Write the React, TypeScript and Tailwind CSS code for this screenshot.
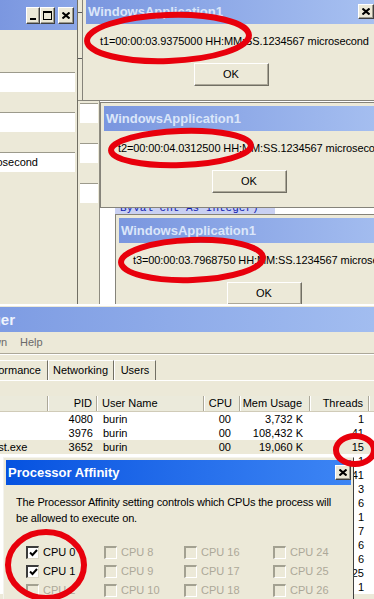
import React from "react";

type Proc = { name: string; pid: string; user: string; cpu: string; mem: string; threads: string };

// rows from the 4th on sit behind the affinity dialog; only their thread count shows
const procs: Proc[] = [
  { name: "ctfmon.exe", pid: "4080", user: "burin", cpu: "00", mem: "3,732 K", threads: "1" },
  { name: "devenv.exe", pid: "3976", user: "burin", cpu: "00", mem: "108,432 K", threads: "41" },
  { name: "ProcessorTest.exe", pid: "3652", user: "burin", cpu: "00", mem: "19,060 K", threads: "15" },
  { name: "", pid: "3412", user: "", cpu: "", mem: "", threads: "1" },
  { name: "", pid: "3320", user: "", cpu: "", mem: "", threads: "41" },
  { name: "", pid: "3104", user: "", cpu: "", mem: "", threads: "3" },
  { name: "", pid: "1796", user: "", cpu: "", mem: "", threads: "6" },
  { name: "", pid: "1720", user: "", cpu: "", mem: "", threads: "1" },
  { name: "", pid: "1548", user: "", cpu: "", mem: "", threads: "7" },
  { name: "", pid: "1384", user: "", cpu: "", mem: "", threads: "6" },
  { name: "", pid: "1264", user: "", cpu: "", mem: "", threads: "6" },
  { name: "", pid: "1120", user: "", cpu: "", mem: "", threads: "25" },
  { name: "", pid: "904", user: "", cpu: "", mem: "", threads: "1" },
];

const CloseGlyph = () => (
  <svg width="8" height="7" viewBox="0 0 8 7">
    <path d="M0.5 0.5L7.5 6.5M7.5 0.5L0.5 6.5" stroke="#000" strokeWidth="2" />
  </svg>
);

function CaptionButton({ children, className = "" }: { children?: React.ReactNode; className?: string }) {
  return (
    <div
      className={`flex items-center justify-center bg-[#ece9d8] border border-t-white border-l-white border-r-[#404040] border-b-[#404040] shadow-[inset_-1px_-1px_0_#9d9b8e] ${className}`}
    >
      {children}
    </div>
  );
}

function OkButton() {
  return (
    <div className="self-center w-[75px] h-[23px] shrink-0 flex items-center justify-center text-[11px] text-black bg-[#ece9d8] border border-t-white border-l-white border-r-[#716f64] border-b-[#716f64] shadow-[inset_-1px_-1px_0_#aca899]">
      OK
    </div>
  );
}

function MsgBox({ text, close }: { text: string; close?: boolean }) {
  return (
    <div className="flex flex-col w-full h-full bg-[#ece9d8] border border-[#85837a] p-[3px]">
      <div className="h-[25px] shrink-0 flex items-center pl-[2px] pr-[2px] bg-linear-to-r from-[#7a96df] to-[#a8c1f1]">
        <span className="text-[13px] font-bold leading-none text-[#dbe6f9]">WindowsApplication1</span>
        {close && (
          <CaptionButton className="ml-auto w-[16px] h-[15px]">
            <CloseGlyph />
          </CaptionButton>
        )}
      </div>
      <div className="pl-[14px] pt-[11px] text-[11px] leading-[13px] whitespace-nowrap tracking-[-0.1px] text-black">
        {text}
      </div>
      <div className="mt-[15px] flex flex-col">
        <OkButton />
      </div>
    </div>
  );
}

function Check({ on, disabled }: { on?: boolean; disabled?: boolean }) {
  return (
    <div
      className={
        disabled
          ? "w-[13px] h-[13px] shrink-0 bg-[#ece9d8] border-t-2 border-l-2 border-b border-r border-t-[#a3a191] border-l-[#a3a191] border-b-white border-r-white"
          : "w-[13px] h-[13px] shrink-0 flex items-center justify-center bg-white border-t-2 border-l-2 border-b border-r border-t-[#3c3c3c] border-l-[#3c3c3c] border-b-[#dcd8c8] border-r-[#dcd8c8]"
      }
    >
      {on && (
        <svg width="9" height="8" viewBox="0 0 9 8">
          <path d="M1 3.5L3.5 6L8 1" fill="none" stroke="#000" strokeWidth="2" />
        </svg>
      )}
    </div>
  );
}

const cpuRows = [
  [0, 8, 16, 24],
  [1, 9, 17, 25],
  [2, 10, 18, 26],
];

const colW = ["w-[48px]", "w-[49px]", "w-[107px]", "w-[36px]", "w-[70px]", "w-[59px]"];

export default function App() {
  return (
    <div className="relative w-[374px] h-[599px] overflow-hidden bg-[#ece9d8] font-['Liberation_Sans',Arial,sans-serif] text-black">
      {/* form behind, top left */}
      <div className="absolute left-0 top-0 w-[78px] h-[306px] flex flex-col bg-[#ece9d8] border-r border-[#716f64]">
        <div className="h-[30px] shrink-0 flex items-center justify-end pr-[3px] bg-linear-to-r from-[#7b97e0] to-[#8ba6e7]">
          <CaptionButton className="w-[14px] h-[17px] items-end pb-[3px]">
            <div className="w-[6px] h-[2px] bg-black" />
          </CaptionButton>
          <CaptionButton className="w-[15px] h-[17px]">
            <div className="w-[9px] h-[9px] border border-t-2 border-black" />
          </CaptionButton>
          <CaptionButton className="ml-[3px] w-[16px] h-[17px]">
            <CloseGlyph />
          </CaptionButton>
        </div>
        <div className="flex flex-col pt-[42px] gap-[20px]">
          <div className="w-[75px] h-[20px] bg-white border-t border-[#9c9a8c]" />
          <div className="w-[75px] h-[20px] bg-white border-t border-[#9c9a8c]" />
          <div className="w-[75px] h-[20px] bg-white border-t border-[#9c9a8c] flex items-center overflow-hidden">
            <div className="w-[38px] shrink-0 flex justify-end whitespace-nowrap text-[11px] leading-[13px]">
              t1=00:00:03.9375000 HH:MM:SS.1234567 microsecond
            </div>
          </div>
        </div>
      </div>

      {/* ruler marks between windows */}
      <div className="absolute left-[78px] top-0 w-[5px] h-[100px] flex flex-col pt-[12px] gap-[45px]">
        <div className="w-[4px] h-[1px] bg-[#5a5a5a]" />
        <div className="w-[4px] h-[1px] bg-[#5a5a5a]" />
      </div>

      {/* strip of a second form */}
      <div className="absolute left-[78px] top-[100px] w-[22px] h-[206px] flex flex-col pt-[2px] gap-[20px] bg-[#ece9d8] border-t border-r border-[#8d8b80]">
        <div className="ml-[2px] w-[18px] h-[20px] bg-white border-t border-[#9c9a8c]" />
        <div className="ml-[2px] w-[18px] h-[20px] bg-white border-t border-[#9c9a8c]" />
        <div className="ml-[2px] w-[18px] h-[20px] bg-white border-t border-[#9c9a8c]" />
      </div>

      {/* code editor behind the message boxes */}
      <div className="absolute left-[100px] top-[100px] w-[274px] h-[206px] bg-white flex flex-col">
        <div className="mt-[108px] ml-[15px] w-[160px] h-[6px] overflow-hidden flex items-end bg-[#c9d0f2]">
          <span className="pl-[5px] mb-[-1px] whitespace-nowrap font-['Liberation_Mono',monospace] text-[11px] leading-[13px] text-[#1020b0]">
            ByVal cnt As Integer)
          </span>
        </div>
      </div>

      {/* message boxes */}
      <div className="absolute left-[82px] top-[-5px] w-[298px] h-[106px]">
        <MsgBox text="t1=00:00:03.9375000 HH:MM:SS.1234567 microsecond" close />
      </div>
      <div className="absolute left-[100px] top-[102px] w-[298px] h-[106px]">
        <MsgBox text="t2=00:00:04.0312500 HH:MM:SS.1234567 microsecond" />
      </div>
      <div className="absolute left-[115px] top-[214px] w-[298px] h-[106px]">
        <MsgBox text="t3=00:00:03.7968750 HH:MM:SS.1234567 microsecond" />
      </div>

      {/* task manager */}
      <div className="absolute left-0 top-[304px] w-[374px] h-[295px] flex flex-col bg-[#ece9d8] border-t-2 border-white">
        <div className="mt-[1px] h-[25px] shrink-0 flex items-center bg-linear-to-r from-[#7e9ce3] to-[#a2bdf0]">
          <div className="w-[15px] shrink-0 flex justify-end whitespace-nowrap text-[15px] font-bold leading-none text-[#eef3fd]">
            Windows Task Manager
          </div>
        </div>
        <div className="h-[21px] shrink-0 flex items-center text-[11px] text-[#6a6a6a]">
          <div className="w-[7px] shrink-0 flex justify-end whitespace-nowrap">Shut Down</div>
          <span className="ml-[13px]">Help</span>
        </div>
        <div className="h-[2px] shrink-0 border-t border-[#aca899] border-b border-b-white" />
        <div className="mt-[4px] h-[21px] shrink-0 flex items-end text-[11px]">
          <div className="w-[48px] shrink-0 flex justify-end whitespace-nowrap">
            <div className="h-[20px] flex items-center px-[5px] border-t border-l border-white border-r border-r-[#8a887c]">Applications</div>
            <div className="h-[20px] flex items-center px-[5px] border-t border-l border-white border-r border-r-[#8a887c]">Processes</div>
            <div className="h-[20px] flex items-center pl-[5px] pr-[6px] border-t border-l border-white border-r border-r-[#716f64]">Performance</div>
          </div>
          <div className="w-[66px] h-[20px] flex items-center pl-[4px] border-t border-l border-white border-r border-r-[#716f64] whitespace-nowrap">
            Networking
          </div>
          <div className="w-[42px] h-[20px] flex items-center justify-center border-t border-l border-white border-r border-r-[#716f64]">
            Users
          </div>
        </div>
        <div className="flex-1 border-t border-white flex flex-col">
          <div className="mt-[15px] bg-white flex flex-col text-[11px]">
            <div className="h-[16px] flex bg-[#ebeadb] border-b border-[#d0cbb8]">
              {["Image Name", "PID", "User Name", "CPU", "Mem Usage", "Threads"].map((h, i) => (
                <div
                  key={h}
                  className={`${colW[i]} shrink-0 flex items-center border-r border-[#aca899] shadow-[1px_0_0_#fff] whitespace-nowrap ${
                    i === 0 ? "" : i === 2 ? "pl-[5px]" : i === 1 ? "justify-end pr-[4px]" : i === 5 ? "justify-end pr-[5px]" : "justify-end pr-[7px]"
                  }`}
                >
                  {i === 0 ? <span className="ml-[-63px]">{h}</span> : h}
                </div>
              ))}
              <div className="flex-1" />
            </div>
            {procs.map((p, r) => (
              <div key={p.pid} className={`h-[14px] flex items-center leading-[14px] ${r === 2 ? "bg-[#ece9d8]" : "bg-white"}`}>
                <div className="w-[48px] shrink-0 whitespace-nowrap">
                  <span className="ml-[-63px]">{p.name}</span>
                </div>
                <div className="w-[49px] shrink-0 text-right pr-[4px]">{r < 3 ? p.pid : ""}</div>
                <div className="w-[107px] shrink-0 pl-[6px] whitespace-nowrap overflow-hidden">{p.user}</div>
                <div className="w-[36px] shrink-0 text-right pr-[9px]">{p.cpu}</div>
                <div className="w-[70px] shrink-0 text-right pr-[7px]">{p.mem}</div>
                <div className="w-[59px] shrink-0 text-right pr-[5px]">{p.threads}</div>
              </div>
            ))}
          </div>
        </div>
      </div>

      {/* processor affinity dialog */}
      <div className="absolute left-[3px] top-[457px] w-[351px] h-[150px] flex flex-col bg-[#ece9d8] border border-t-[#f4f3ee] border-l-[#f4f3ee] border-r-[#404040] p-[2px]">
        <div className="h-[25px] shrink-0 flex items-center pl-[2px] bg-linear-to-r from-[#0552e0] to-[#3d85f4]">
          <span className="text-[13px] font-bold leading-none text-white">Processor Affinity</span>
          <CaptionButton className="ml-auto w-[16px] h-[15px]">
            <CloseGlyph />
          </CaptionButton>
        </div>
        <div className="pl-[10px] pt-[9px] text-[11px] leading-[16px] tracking-[-0.15px] whitespace-nowrap">
          <div>The Processor Affinity setting controls which CPUs the process will</div>
          <div>be allowed to execute on.</div>
        </div>
        <div className="mt-[17px] pl-[20px] grid grid-cols-[78px_80px_89px_1fr] auto-rows-[19px] text-[11px]">
          {cpuRows.flat().map((n) => {
            const enabled = n === 0 || n === 1;
            return (
              <div key={n} className="flex items-center gap-[4px] whitespace-nowrap">
                <Check on={enabled} disabled={!enabled} />
                <span className={enabled ? "text-black" : "text-[#aca899]"}>CPU {n}</span>
              </div>
            );
          })}
        </div>
      </div>

      {/* red marker circles */}
      <svg className="absolute left-0 top-0 pointer-events-none" width="374" height="599" viewBox="0 0 374 599">
        <g fill="none" stroke="#e8000c" strokeWidth="6">
          <ellipse cx="168" cy="38" rx="81" ry="23" transform="rotate(-2 168 38)" />
          <ellipse cx="181" cy="148" rx="70" ry="17" transform="rotate(-2 181 148)" />
          <ellipse cx="192" cy="260" rx="71" ry="20" transform="rotate(-2 192 260)" />
          <ellipse cx="46" cy="565" rx="38" ry="33" />
          <ellipse cx="355" cy="450" rx="19" ry="14" />
        </g>
      </svg>
    </div>
  );
}
